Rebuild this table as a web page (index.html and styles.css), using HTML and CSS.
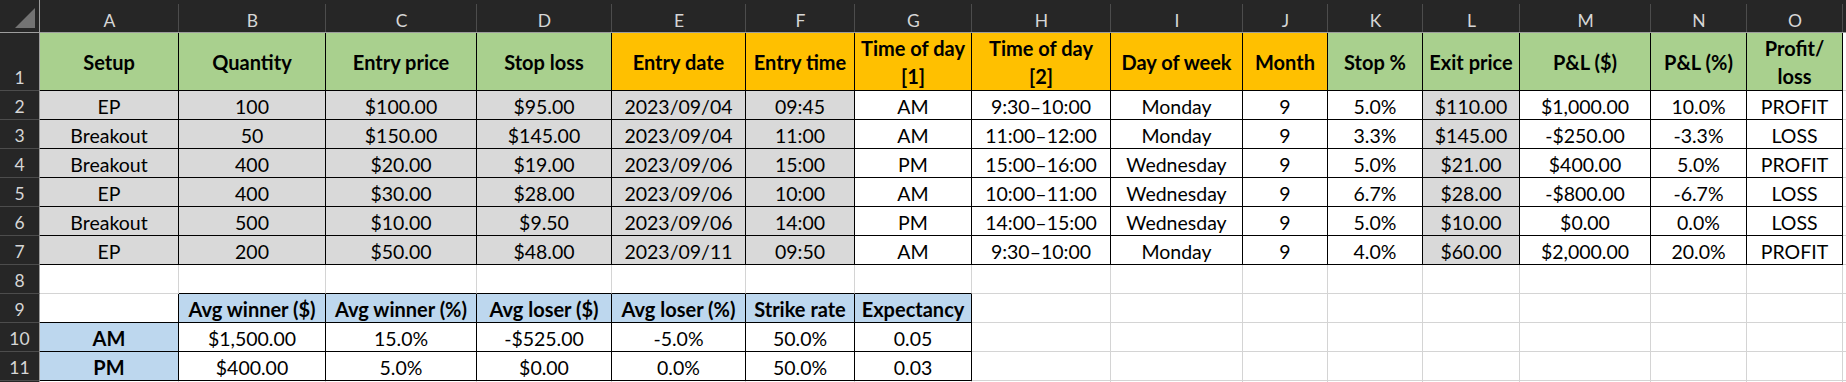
FILE: index.html
```html
<!DOCTYPE html>
<html>
<head>
<meta charset="utf-8">
<link rel="stylesheet" href="styles.css">
</head>
<body>
<div class="sheet">
  <!-- column header row -->
  <div class="corner"><span class="tri"></span></div>
  <div class="ch">A</div><div class="ch">B</div><div class="ch">C</div><div class="ch">D</div>
  <div class="ch">E</div><div class="ch">F</div><div class="ch">G</div><div class="ch">H</div>
  <div class="ch">I</div><div class="ch">J</div><div class="ch">K</div><div class="ch">L</div>
  <div class="ch">M</div><div class="ch">N</div><div class="ch">O</div><div class="ch"></div>

  <!-- row 1 -->
  <div class="rh rh1">1</div>
  <div class="c b hd green">Setup</div>
  <div class="c b hd green">Quantity</div>
  <div class="c b hd green">Entry price</div>
  <div class="c b hd green">Stop loss</div>
  <div class="c b hd orange">Entry date</div>
  <div class="c b hd orange">Entry time</div>
  <div class="c b hd orange">Time of day<br>[1]</div>
  <div class="c b hd orange">Time of day<br>[2]</div>
  <div class="c b hd orange">Day of week</div>
  <div class="c b hd orange">Month</div>
  <div class="c b hd green">Stop %</div>
  <div class="c b hd green">Exit price</div>
  <div class="c b hd green">P&amp;L ($)</div>
  <div class="c b hd green">P&amp;L (%)</div>
  <div class="c b hd green">Profit/<br>loss</div>
  <div class="c"></div>

  <!-- row 2 -->
  <div class="rh">2</div>
  <div class="c b gray">EP</div><div class="c b gray">100</div><div class="c b gray">$100.00</div><div class="c b gray">$95.00</div>
  <div class="c b gray">2023/09/04</div><div class="c b gray">09:45</div><div class="c b">AM</div><div class="c b">9:30–10:00</div>
  <div class="c b">Monday</div><div class="c b">9</div><div class="c b">5.0%</div><div class="c b gray">$110.00</div>
  <div class="c b">$1,000.00</div><div class="c b">10.0%</div><div class="c b">PROFIT</div><div class="c"></div>

  <!-- row 3 -->
  <div class="rh">3</div>
  <div class="c b gray">Breakout</div><div class="c b gray">50</div><div class="c b gray">$150.00</div><div class="c b gray">$145.00</div>
  <div class="c b gray">2023/09/04</div><div class="c b gray">11:00</div><div class="c b">AM</div><div class="c b">11:00–12:00</div>
  <div class="c b">Monday</div><div class="c b">9</div><div class="c b">3.3%</div><div class="c b gray">$145.00</div>
  <div class="c b">-$250.00</div><div class="c b">-3.3%</div><div class="c b">LOSS</div><div class="c"></div>

  <!-- row 4 -->
  <div class="rh">4</div>
  <div class="c b gray">Breakout</div><div class="c b gray">400</div><div class="c b gray">$20.00</div><div class="c b gray">$19.00</div>
  <div class="c b gray">2023/09/06</div><div class="c b gray">15:00</div><div class="c b">PM</div><div class="c b">15:00–16:00</div>
  <div class="c b">Wednesday</div><div class="c b">9</div><div class="c b">5.0%</div><div class="c b gray">$21.00</div>
  <div class="c b">$400.00</div><div class="c b">5.0%</div><div class="c b">PROFIT</div><div class="c"></div>

  <!-- row 5 -->
  <div class="rh">5</div>
  <div class="c b gray">EP</div><div class="c b gray">400</div><div class="c b gray">$30.00</div><div class="c b gray">$28.00</div>
  <div class="c b gray">2023/09/06</div><div class="c b gray">10:00</div><div class="c b">AM</div><div class="c b">10:00–11:00</div>
  <div class="c b">Wednesday</div><div class="c b">9</div><div class="c b">6.7%</div><div class="c b gray">$28.00</div>
  <div class="c b">-$800.00</div><div class="c b">-6.7%</div><div class="c b">LOSS</div><div class="c"></div>

  <!-- row 6 -->
  <div class="rh">6</div>
  <div class="c b gray">Breakout</div><div class="c b gray">500</div><div class="c b gray">$10.00</div><div class="c b gray">$9.50</div>
  <div class="c b gray">2023/09/06</div><div class="c b gray">14:00</div><div class="c b">PM</div><div class="c b">14:00–15:00</div>
  <div class="c b">Wednesday</div><div class="c b">9</div><div class="c b">5.0%</div><div class="c b gray">$10.00</div>
  <div class="c b">$0.00</div><div class="c b">0.0%</div><div class="c b">LOSS</div><div class="c"></div>

  <!-- row 7 -->
  <div class="rh">7</div>
  <div class="c b gray">EP</div><div class="c b gray">200</div><div class="c b gray">$50.00</div><div class="c b gray">$48.00</div>
  <div class="c b gray">2023/09/11</div><div class="c b gray">09:50</div><div class="c b">AM</div><div class="c b">9:30–10:00</div>
  <div class="c b">Monday</div><div class="c b">9</div><div class="c b">4.0%</div><div class="c b gray">$60.00</div>
  <div class="c b">$2,000.00</div><div class="c b">20.0%</div><div class="c b">PROFIT</div><div class="c"></div>

  <!-- row 8 -->
  <div class="rh">8</div>
  <div class="c"></div>
  <div class="c bb"></div><div class="c bb"></div><div class="c bb"></div><div class="c bb"></div><div class="c bb"></div><div class="c bb"></div>
  <div class="c"></div><div class="c"></div><div class="c"></div><div class="c"></div><div class="c"></div><div class="c"></div>
  <div class="c"></div><div class="c"></div><div class="c"></div>

  <!-- row 9 -->
  <div class="rh">9</div>
  <div class="c b"></div>
  <div class="c b blue bold">Avg winner ($)</div><div class="c b blue bold">Avg winner (%)</div><div class="c b blue bold">Avg loser ($)</div>
  <div class="c b blue bold">Avg loser (%)</div><div class="c b blue bold">Strike rate</div><div class="c b blue bold">Expectancy</div>
  <div class="c"></div><div class="c"></div><div class="c"></div><div class="c"></div><div class="c"></div><div class="c"></div>
  <div class="c"></div><div class="c"></div><div class="c"></div>

  <!-- row 10 -->
  <div class="rh">10</div>
  <div class="c b blue bold">AM</div>
  <div class="c b">$1,500.00</div><div class="c b">15.0%</div><div class="c b">-$525.00</div>
  <div class="c b">-5.0%</div><div class="c b">50.0%</div><div class="c b">0.05</div>
  <div class="c"></div><div class="c"></div><div class="c"></div><div class="c"></div><div class="c"></div><div class="c"></div>
  <div class="c"></div><div class="c"></div><div class="c"></div>

  <!-- row 11 -->
  <div class="rh">11</div>
  <div class="c b blue bold">PM</div>
  <div class="c b">$400.00</div><div class="c b">5.0%</div><div class="c b">$0.00</div>
  <div class="c b">0.0%</div><div class="c b">50.0%</div><div class="c b">0.03</div>
  <div class="c"></div><div class="c"></div><div class="c"></div><div class="c"></div><div class="c"></div><div class="c"></div>
  <div class="c"></div><div class="c"></div><div class="c"></div>

  <!-- row 12 (only its top edge is visible) -->
  <div class="rh"></div>
  <div class="c"></div><div class="c"></div><div class="c"></div><div class="c"></div><div class="c"></div><div class="c"></div>
  <div class="c"></div><div class="c"></div><div class="c"></div><div class="c"></div><div class="c"></div><div class="c"></div>
  <div class="c"></div><div class="c"></div><div class="c"></div><div class="c"></div>
</div>
</body>
</html>
```

FILE: styles.css
```css
html, body {
  margin: 0;
  padding: 0;
  background: #ffffff;
}

.sheet {
  width: 1846px;
  height: 382px;
  overflow: hidden;
  display: grid;
  grid-template-columns: 40px 139px 147px 151px 135px 134px 109px 117px 139px 132px 85px 95px 97px 131px 96px 96px 4px;
  grid-template-rows: 33px 58px repeat(11, 29px);
  font-family: "Lato", "Liberation Sans", sans-serif;
  font-size: 19.5px;
  color: #000;
  background: #fff;
}

.sheet > div {
  box-sizing: border-box;
  min-width: 0;
}

/* headers */
.corner {
  position: relative;
  background: #262626;
  border-bottom: 1px solid #9d9d9d;
  border-right: 1px solid #9d9d9d;
}
.tri {
  position: absolute;
  left: 15px;
  top: 8px;
  width: 0;
  height: 0;
  border-left: 20px solid transparent;
  border-bottom: 20px solid #737373;
}

.ch {
  background:
    linear-gradient(#262626, #262626) 0 0 / 100% 4px no-repeat,
    linear-gradient(to left, #4c4c4c 1px, transparent 1px),
    #262626;
  border-bottom: 1px solid #9d9d9d;
  color: #d6d6d6;
  font-size: 17.5px;
  display: flex;
  align-items: flex-end;
  justify-content: center;
  padding-bottom: 1px;
  overflow: hidden;
}

.rh {
  background: #262626;
  border-right: 1px solid #9d9d9d;
  border-bottom: 1px solid #4c4c4c;
  color: #d6d6d6;
  font-size: 17.5px;
  display: flex;
  align-items: flex-end;
  justify-content: center;
  padding-bottom: 2px;
}

/* cells */
.c {
  border-right: 1px solid #d4d4d4;
  border-bottom: 1px solid #d4d4d4;
  display: flex;
  align-items: flex-end;
  justify-content: center;
  padding-bottom: 1px;
  white-space: nowrap;
  overflow: hidden;
}
.b {
  border-right-color: #000;
  border-bottom-color: #000;
}
.bb {
  border-bottom-color: #000;
}

.hd {
  font-weight: 700;
  font-size: 20px;
  align-items: center;
  text-align: center;
  line-height: 28px;
  padding-bottom: 0;
}
.bold {
  font-weight: 700;
  font-size: 20px;
}

.green { background: #a9d08e; }
.orange { background: #ffc000; }
.gray { background: #d9d9d9; }
.blue { background: #bdd7ee; }
```
